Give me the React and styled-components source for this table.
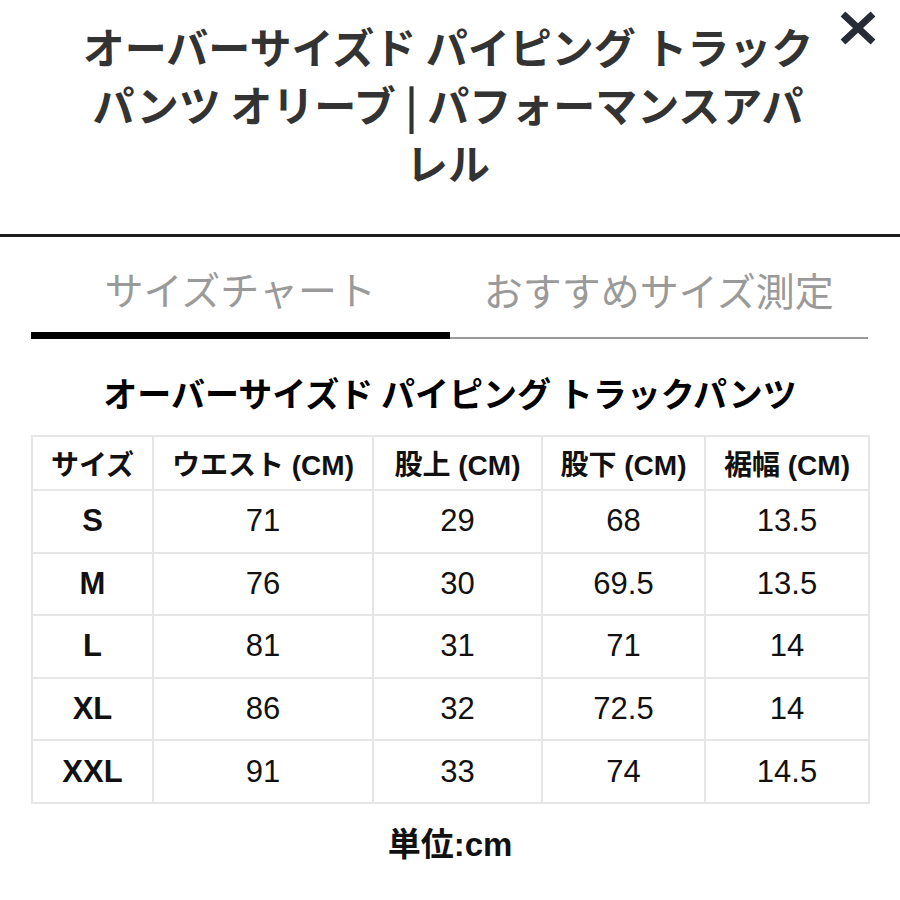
import React, { useState } from "react";
import styled, { createGlobalStyle } from "styled-components";

const GlobalStyle = createGlobalStyle`
  body {
    margin: 0;
    background: #fff;
    font-family: "Liberation Sans", "Noto Sans CJK JP", sans-serif;
  }
`;

const columns = ["サイズ", "ウエスト (CM)", "股上 (CM)", "股下 (CM)", "裾幅 (CM)"];

const rows = [
  ["S", "71", "29", "68", "13.5"],
  ["M", "76", "30", "69.5", "13.5"],
  ["L", "81", "31", "71", "14"],
  ["XL", "86", "32", "72.5", "14"],
  ["XXL", "91", "33", "74", "14.5"],
];

const widths = [121, 220, 169, 163, 164];

const CloseIcon = () => (
  <svg width="40" height="36" viewBox="0 0 40 36">
    <path
      d="M5 4 L35 32 M35 4 L5 32"
      stroke="#262b36"
      strokeWidth="7"
      strokeLinecap="butt"
      fill="none"
    />
  </svg>
);

export default function App() {
  const [tab, setTab] = useState(0);
  return (
    <Page>
      <GlobalStyle />
      <Header>
        <Title>
          オーバーサイズド パイピング トラック パンツ オリーブ | パフォーマンスアパレル
        </Title>
        <Close aria-label="close">
          <CloseIcon />
        </Close>
      </Header>
      <Tabs>
        <Tab active={tab === 0} onClick={() => setTab(0)}>
          サイズチャート
        </Tab>
        <Tab active={tab === 1} onClick={() => setTab(1)}>
          おすすめサイズ測定
        </Tab>
      </Tabs>
      <ChartTitle>オーバーサイズド パイピング トラックパンツ</ChartTitle>
      <Table>
        <colgroup>
          {widths.map((w, i) => (
            <col key={i} style={{ width: w }} />
          ))}
        </colgroup>
        <thead>
          <tr>
            {columns.map((c) => (
              <HeadCell key={c}>{c}</HeadCell>
            ))}
          </tr>
        </thead>
        <tbody>
          {rows.map((r) => (
            <tr key={r[0]}>
              {r.map((v, i) => (
                <Cell key={i} first={i === 0}>
                  {v}
                </Cell>
              ))}
            </tr>
          ))}
        </tbody>
      </Table>
      <Unit>単位:cm</Unit>
    </Page>
  );
}

const Page = styled.div`
  width: 900px;
  height: 900px;
  overflow: hidden;
  background: #fff;
`;

const Header = styled.div`
  position: relative;
  height: 237px;
  border-bottom: 3px solid #1c1c1c;
  padding: 17px 84px 0 80px;
  box-sizing: border-box;
`;

const Title = styled.h1`
  margin: 0;
  font-family: "Noto Sans CJK JP", sans-serif;
  font-size: 42px;
  font-weight: 700;
  line-height: 58px;
  color: #333;
  text-align: center;
  letter-spacing: 0;
`;

const Close = styled.button`
  position: absolute;
  top: 10px;
  right: 22px;
  padding: 0;
  border: none;
  background: none;
  display: flex;
`;

const Tabs = styled.div`
  display: flex;
  align-items: flex-end;
  margin: 0 32px 0 31px;
  padding-top: 23px;
`;

const Tab = styled.div`
  flex: 1;
  text-align: center;
  font-family: "Noto Sans CJK JP", sans-serif;
  font-size: 39px;
  font-weight: 400;
  color: #9a9a9a;
  line-height: 56px;
  padding-bottom: ${(p) => (p.active ? "16px" : "20px")};
  border-bottom: ${(p) => (p.active ? "7px solid #000" : "2px solid #9a9a9a")};
  margin-bottom: 0;
  cursor: pointer;
`;

const ChartTitle = styled.h2`
  margin: 30px 0 0;
  text-align: center;
  font-family: "Noto Sans CJK JP", sans-serif;
  font-size: 34px;
  font-weight: 700;
  line-height: 48px;
  color: #000;
`;

const Table = styled.table`
  margin: 18px 0 0 31px;
  width: 837px;
  border-collapse: collapse;
  table-layout: fixed;
`;

const HeadCell = styled.th`
  height: 52px;
  border: 2px solid #e6e6e6;
  padding: 0;
  font-family: "Liberation Sans", "Noto Sans CJK JP", sans-serif;
  font-size: 28px;
  font-weight: 700;
  color: #111;
  text-align: center;
  white-space: nowrap;
`;

const Cell = styled.td`
  height: 60.6px;
  border: 2px solid #e6e6e6;
  padding: 0;
  font-family: "Liberation Sans", sans-serif;
  font-size: 31px;
  font-weight: ${(p) => (p.first ? 700 : 400)};
  color: #111;
  text-align: center;
`;

const Unit = styled.div`
  margin-top: 14px;
  text-align: center;
  font-family: "Liberation Sans", "Noto Sans CJK JP", sans-serif;
  font-size: 33px;
  font-weight: 700;
  color: #111;
`;
